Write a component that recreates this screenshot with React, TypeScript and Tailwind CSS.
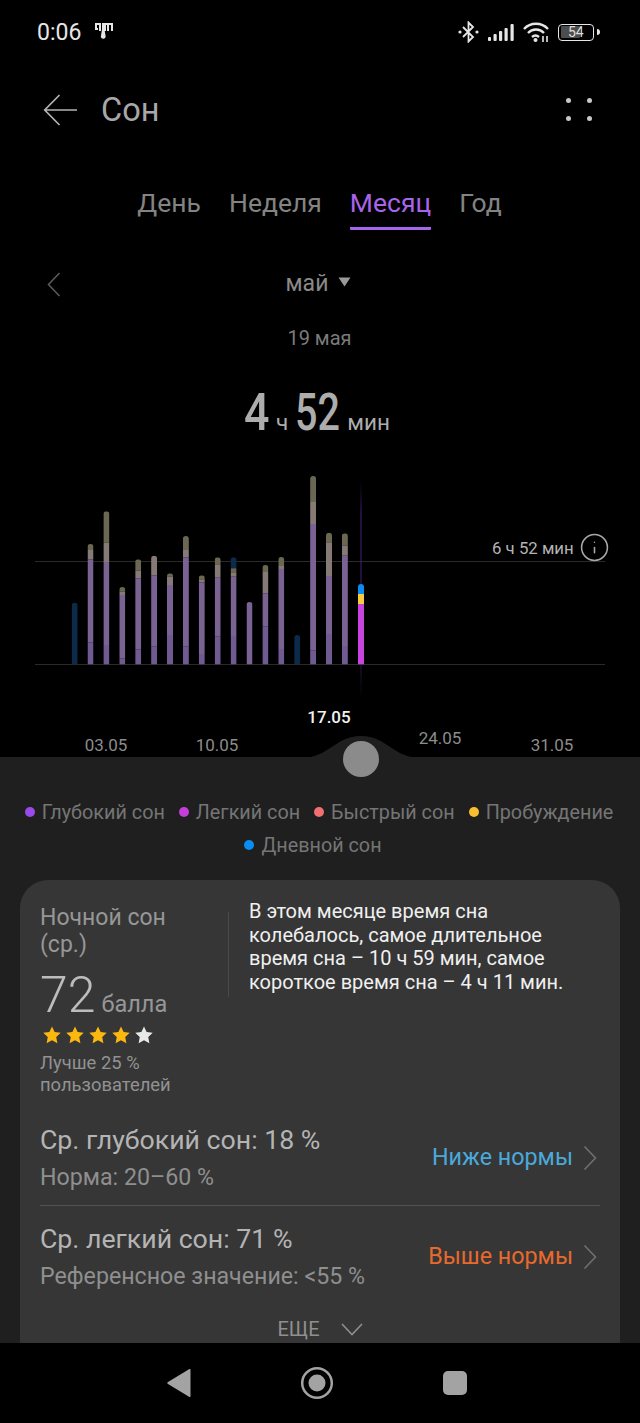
import { Info } from "lucide-react";

const C = {
  olive: "#6a6853",
  tan: "#857a76",
  purple: "#7a6293",
  deep: "#6f5b91",
  navy: "#0c2a49",
};

// [center x, segments top-down as [y1, y2, colour]]
const bars: { x: number; segs: [number, number, string][] }[] = [
  { x: 74.7, segs: [[602.7, 664.5, C.navy]] },
  { x: 90.5, segs: [[544, 550, C.olive], [550, 559.3, C.tan], [559.3, 642.3, C.purple], [642.3, 664.5, C.deep]] },
  { x: 106.4, segs: [[511.3, 542.7, C.olive], [542.7, 562, C.tan], [562, 645, C.purple], [645, 664.5, C.deep]] },
  { x: 122.3, segs: [[587, 591.7, C.olive], [591.7, 595, C.tan], [595, 658.3, C.purple], [658.3, 664.5, C.deep]] },
  { x: 138.2, segs: [[559.3, 570.7, C.olive], [570.7, 578.3, C.tan], [578.3, 649.3, C.purple], [649.3, 664.5, C.deep]] },
  { x: 154.1, segs: [[555.7, 575.3, C.tan], [575.3, 646.7, C.purple], [646.7, 664.5, C.deep]] },
  { x: 170, segs: [[573.3, 576.7, C.olive], [576.7, 585, C.tan], [585, 635, C.purple], [635, 664.5, C.deep]] },
  { x: 185.9, segs: [[536, 550, C.olive], [550, 557.3, C.tan], [557.3, 646.7, C.purple], [646.7, 664.5, C.deep]] },
  { x: 201.8, segs: [[575.3, 579.3, C.olive], [579.3, 582.3, C.tan], [582.3, 654, C.purple], [654, 664.5, C.deep]] },
  { x: 217.7, segs: [[557.3, 564.3, C.olive], [564.3, 577.7, C.tan], [577.7, 636.7, C.purple], [636.7, 664.5, C.deep]] },
  { x: 233.6, segs: [[557.3, 568.3, C.navy], [568.3, 572.3, C.olive], [572.3, 576.7, C.tan], [576.7, 636, C.purple], [636, 664.5, C.deep]] },
  { x: 249.5, segs: [[602, 664.5, C.purple]] },
  { x: 265.4, segs: [[565, 572, C.olive], [572, 593.3, C.tan], [593.3, 626.7, C.purple], [626.7, 664.5, C.deep]] },
  { x: 281.3, segs: [[557, 566, C.olive], [566, 569, C.tan], [569, 649, C.purple], [649, 664.5, C.deep]] },
  { x: 297.2, segs: [[635, 664.5, C.navy]] },
  { x: 313.1, segs: [[476, 502, C.olive], [502, 524, C.tan], [524, 650.7, C.purple], [650.7, 664.5, C.deep]] },
  { x: 329, segs: [[532.7, 542.3, C.olive], [542.3, 576, C.tan], [576, 634, C.purple], [634, 664.5, C.deep]] },
  { x: 344.9, segs: [[533.3, 545.7, C.olive], [545.7, 555.7, C.tan], [555.7, 646, C.purple], [646, 664.5, C.deep]] },
  { x: 361, segs: [[584, 594, "#0a8cf2"], [594, 604, "#f8ca3e"], [604, 664.5, "#c744de"]] },
];

function SleepChart() {
  return (
    <svg viewBox="0 470 640 287" className="absolute inset-0 h-full w-full">
      <defs>
        <linearGradient id="cursor" x1="0" y1="0" x2="0" y2="1">
          <stop offset="0" stopColor="#3a1a63" stopOpacity="0" />
          <stop offset="0.15" stopColor="#4a2080" />
          <stop offset="0.8" stopColor="#3a1a63" />
          <stop offset="1" stopColor="#3a1a63" stopOpacity="0" />
        </linearGradient>
        {bars.map((b, i) => (
          <clipPath id={`bar-${i}`} key={i}>
            <path d={`M${b.x - 3} 664.5V${b.segs[0][0] + 3}a3 3 0 0 1 6 0V664.5z`} />
          </clipPath>
        ))}
      </defs>
      <rect x="35" y="561" width="570" height="1" fill="#2a2a2a" />
      <rect x="35" y="664" width="570" height="1" fill="#2a2a2a" />
      <rect x="360.5" y="480" width="1" height="220" fill="url(#cursor)" />
      {bars.map((b, i) => (
        <g key={i} clipPath={`url(#bar-${i})`}>
          {b.segs.map(([y1, y2, fill], j) => (
            <rect key={j} x={b.x - 3} y={y1} width="6" height={y2 - y1} fill={fill} />
          ))}
        </g>
      ))}
    </svg>
  );
}

function AxisLabel({ text, className }: { text: string; className: string }) {
  return <span className={`absolute -translate-x-1/2 text-[17px] leading-[18px] ${className}`}>{text}</span>;
}

function StatusBar() {
  return (
    <div className="flex h-[64px] shrink-0 items-center justify-between pl-[37px] pr-[40px] text-[#e6e6e6]">
      <div className="flex items-center gap-[13px]">
        <span className="text-[23px] leading-none">0:06</span>
        <svg width="20" height="17" viewBox="0 0 20 17" className="-mt-[2px] fill-[#e6e6e6]">
          <path d="M1 0h6v8H5V2H3v3h1v2H1zM8 0h11v8h-2V2h-2v6h-2V2h-1v6H8z" />
          <path d="M8 6.500h2.500l1 6a2.400 2.400 0 1 1-4.500 0z" />
        </svg>
      </div>
      <div className="flex items-center gap-[9px]">
        <svg width="21" height="22" viewBox="0 0 21 22" fill="none" stroke="#e6e6e6" strokeWidth="1.800">
          <path d="M5 6l10 10-4.500 4.500v-19L15 6 5 16" />
          <circle cx="2" cy="11" r="1.600" fill="#e6e6e6" stroke="none" />
          <circle cx="19" cy="11" r="1.600" fill="#e6e6e6" stroke="none" />
        </svg>
        <svg width="26" height="17" viewBox="0 0 26 17" fill="#e6e6e6">
          <rect x="0" y="13" width="3" height="4" rx="1" />
          <rect x="5.500" y="10" width="3.200" height="7" rx="1" />
          <rect x="11" y="7" width="3.200" height="10" rx="1" />
          <rect x="16.500" y="4" width="3.200" height="13" rx="1" />
          <rect x="22.500" y="0" width="3.200" height="17" rx="1" />
        </svg>
        <svg width="26" height="20" viewBox="0 0 26 20" fill="none" stroke="#e6e6e6" strokeWidth="2.400">
          <path d="M1 7a16.500 16.500 0 0 1 24 0" />
          <path d="M5 11a11 11 0 0 1 16 0" />
          <path d="M9 15a5.500 5.500 0 0 1 7 0" />
          <circle cx="12.500" cy="18" r="2" fill="#e6e6e6" stroke="none" />
          <path d="M20 14v6M24 14v6" strokeWidth="1.600" />
        </svg>
        <div className="flex items-center">
          <div className="relative flex h-[17px] w-[36px] items-center rounded-[4px] border-[1.500px] border-[#e6e6e6] p-[1.500px]">
            <div className="h-full w-[19px] rounded-[1px] bg-[#4d4d4d]" />
            <span className="absolute left-[9px] text-[14px] leading-none text-[#dedede]">54</span>
          </div>
          <div className="ml-[3px] h-[6px] w-[3px] rounded-r bg-[#e6e6e6]" />
        </div>
      </div>
    </div>
  );
}

function Header() {
  return (
    <div className="flex h-[92px] shrink-0 items-center justify-between pl-[43px] pr-[48px]">
      <div className="flex items-center gap-[23px]">
        <svg width="35" height="32" viewBox="0 0 35 32" fill="none" stroke="#b4b4b4" strokeWidth="1.700">
          <path d="M34 16H2M16.500 1L1.700 16l14.800 15" />
        </svg>
        <span className="text-[32.500px] leading-none text-[#a8a8a8]">Сон</span>
      </div>
      <div className="-mt-[2px] grid grid-cols-2 gap-x-[16px] gap-y-[13px]">
        <span className="h-[5px] w-[5px] rounded-full bg-[#c8c8c8]" />
        <span className="h-[5px] w-[5px] rounded-full bg-[#c8c8c8]" />
        <span className="h-[5px] w-[5px] rounded-full bg-[#c8c8c8]" />
        <span className="h-[5px] w-[5px] rounded-full bg-[#c8c8c8]" />
      </div>
    </div>
  );
}

function Tabs() {
  return (
    <div className="flex shrink-0 justify-center gap-[28px] pr-[1px] pt-[30px] text-[26.500px] leading-[34px] text-[#838383]">
      <span className="pb-[10px]">День</span>
      <span className="pb-[10px]">Неделя</span>
      <span className="rounded-b-[1px] border-b-[3px] border-[#a865ea] pb-[7px] text-[#a865ea]">Месяц</span>
      <span className="pb-[10px]">Год</span>
    </div>
  );
}

function LegendItem({ color, label, className = "" }: { color: string; label: string; className?: string }) {
  return (
    <span className={`flex items-center gap-[7px] ${className}`}>
      <span className={`-mt-[3px] h-[10px] w-[10px] rounded-full ${color}`} />
      <span>{label}</span>
    </span>
  );
}

function ThinChevronRight() {
  return (
    <svg width="14" height="26" viewBox="0 0 14 26" fill="none" stroke="#6f6f6f" strokeWidth="1.600">
      <path d="M1.500 1.500L12.500 13 1.500 24.500" />
    </svg>
  );
}

function MetricRow({ title, note, status, statusColor }: { title: string; note: string; status: string; statusColor: string }) {
  return (
    <div className="flex items-center justify-between">
      <div>
        <div className="text-[26.700px] leading-[32px] text-[#b4b4b4]">{title}</div>
        <div className="mt-[7px] text-[23.200px] leading-[28px] text-[#8f8f8f]">{note}</div>
      </div>
      <div className="flex items-center gap-[10px] pr-[3px]">
        <span className={`text-[23.300px] leading-none ${statusColor}`}>{status}</span>
        <ThinChevronRight />
      </div>
    </div>
  );
}

function Star({ color }: { color: string }) {
  return (
    <svg width="18" height="18" viewBox="0 0 20 20" className={color}>
      <path fill="currentColor" d="M10 .500l2.900 6.300 6.800.800-5 4.700 1.300 6.800L10 15.700 4 19.100l1.300-6.800-5-4.700 6.800-.800z" />
    </svg>
  );
}

export default function App() {
  return (
    <div className="flex h-[1423px] w-[640px] flex-col overflow-hidden bg-black font-['Roboto',sans-serif]">
      <StatusBar />
      <Header />
      <Tabs />

      <div className="relative mt-[34px] flex h-[40px] shrink-0 items-center justify-center gap-[10px] pr-[3px] text-[23px] text-[#8a8a8a]">
        <svg width="14" height="25" viewBox="0 0 14 25" fill="none" stroke="#5a5a5a" strokeWidth="1.600" className="absolute left-[47px]">
          <path d="M12.500 1L1.500 12.500 12.500 24" />
        </svg>
        <span>май</span>
        <svg width="13" height="10" viewBox="0 0 13 10" className="-mt-[4px] fill-[#9a9a9a]">
          <path d="M0.500 0.500h12L6.500 9.500z" />
        </svg>
      </div>
      <div className="mt-[22px] h-[24px] shrink-0 pr-[1px] text-center text-[20px] leading-[24px] text-[#7b7b7b]">19 мая</div>

      <div className="mt-[36px] flex h-[54px] shrink-0 items-baseline justify-center pr-[6px] text-[#adadad]">
        <span className="inline-block w-[25px] origin-left scale-x-[0.86] text-[52px] font-medium leading-[54px]">4</span>
        <span className="ml-[7px] text-[22.500px]">ч</span>
        <span className="ml-[7px] inline-block w-[44px] origin-left scale-x-[0.76] text-[52px] font-medium leading-[54px]">52</span>
        <span className="ml-[8px] text-[22.500px]">мин</span>
      </div>

      <div className="relative mt-[30px] h-[287px] shrink-0">
        <SleepChart />
        <div className="absolute left-[492px] top-[62px] flex items-center gap-[4px] text-[16.800px] leading-[20px] text-[#b4b4b4]">
          <span className="w-[83px] whitespace-nowrap">6 ч 52 мин</span>
          <Info size={31} strokeWidth={1.2} className="text-[#a8a8a8]" />
        </div>
        <AxisLabel text="03.05" className="left-[106px] top-[266px] text-[#8c8c8c]" />
        <AxisLabel text="10.05" className="left-[217px] top-[266px] text-[#8c8c8c]" />
        <AxisLabel text="17.05" className="left-[329px] top-[238px] font-medium text-[#f2f2f2]" />
        <AxisLabel text="24.05" className="left-[440px] top-[259px] text-[#8c8c8c]" />
        <AxisLabel text="31.05" className="left-[552px] top-[266px] text-[#8c8c8c]" />
      </div>

      <div className="relative min-h-0 flex-1 bg-[#1f1f1f]">
        <svg width="120" height="22" viewBox="0 0 120 22" className="absolute -top-[21px] left-[301px] fill-[#1f1f1f]">
          <path d="M0 22C28 22 34 0 60 0S92 22 120 22z" />
        </svg>
        <div className="absolute -top-[16px] left-[343px] h-[36px] w-[36px] rounded-full bg-[#8b8b8b]" />

        <div className="flex flex-col items-center gap-[9px] pt-[44px] text-[19.800px] leading-[24px] text-[#757575]">
          <div className="flex gap-[14px] pr-[2px]">
            <LegendItem color="bg-[#9a4ae8]" label="Глубокий сон" />
            <LegendItem color="bg-[#c43fd8]" label="Легкий сон" />
            <LegendItem color="bg-[#f07070]" label="Быстрый сон" />
            <LegendItem color="bg-[#f8bd30]" label="Пробуждение" />
          </div>
          <LegendItem color="bg-[#0a8cf2]" label="Дневной сон" className="mr-[14px]" />
        </div>

        <div className="mx-[20px] mt-[22px] h-[500px] rounded-t-[28px] bg-[#363636] px-[20px]">
          <div className="flex pt-[24px]">
            <div className="w-[188px] shrink-0">
              <div className="text-[23px] leading-[27px] text-[#979797]">Ночной сон<br />(ср.)</div>
              <div className="mt-[7px] flex items-baseline gap-[6px]">
                <span className="text-[50px] font-light leading-[60px] text-[#bcbcbc]">72</span>
                <span className="text-[23.500px] text-[#979797]">балла</span>
              </div>
              <div className="mt-[1px] flex gap-[5px] pl-[3px]">
                <Star color="text-[#fbb80f]" />
                <Star color="text-[#fbb80f]" />
                <Star color="text-[#fbb80f]" />
                <Star color="text-[#fbb80f]" />
                <Star color="text-[#e8e8e8]" />
              </div>
              <div className="mt-[8px] text-[18.400px] leading-[22px] text-[#929292]">Лучше 25 %<br />пользователей</div>
            </div>
            <div className="mt-[8px] h-[85px] w-px shrink-0 bg-[#4a4a4a]" />
            <div className="-mt-[4px] w-[340px] pl-[20px] text-[20px] leading-[23.700px] text-[#f0f0f0]">
              В этом месяце время сна колебалось, самое длительное время сна – 10 ч 59 мин, самое короткое время сна – 4 ч 11 мин.
            </div>
          </div>

          <div className="mt-[28px] pb-[14px]">
            <MetricRow title="Ср. глубокий сон: 18 %" note="Норма: 20–60 %" status="Ниже нормы" statusColor="text-[#4ba9da]" />
          </div>
          <div className="border-t border-[#525252] pt-[17px]">
            <MetricRow title="Ср. легкий сон: 71 %" note="Референсное значение: <55 %" status="Выше нормы" statusColor="text-[#e8692d]" />
          </div>
          <div className="mt-[27px] flex items-center justify-center gap-[21px] text-[20px] leading-[24px] text-[#8f8f8f]">
            <span>ЕЩЕ</span>
            <svg width="22" height="13" viewBox="0 0 22 13" fill="none" stroke="#8f8f8f" strokeWidth="1.600">
              <path d="M1 1l10 10.500L21 1" />
            </svg>
          </div>
        </div>
      </div>

      <div className="relative flex h-[80px] shrink-0 items-center justify-center gap-[109px] bg-black pr-[6px]">
        <svg width="24" height="28" viewBox="0 0 24 28" className="fill-[#a3a3a3]">
          <path d="M23.500 1v26a1 1 0 0 1-1.500.800L1 15a1.200 1.200 0 0 1 0-2L22 .200A1 1 0 0 1 23.500 1z" />
        </svg>
        <svg width="34" height="34" viewBox="0 0 34 34" fill="none">
          <circle cx="17" cy="17" r="14.800" stroke="#a3a3a3" strokeWidth="2.500" />
          <circle cx="17" cy="17" r="8.500" fill="#a3a3a3" />
        </svg>
        <div className="h-[24px] w-[24px] rounded-[5px] bg-[#a3a3a3]" />
      </div>
    </div>
  );
}
